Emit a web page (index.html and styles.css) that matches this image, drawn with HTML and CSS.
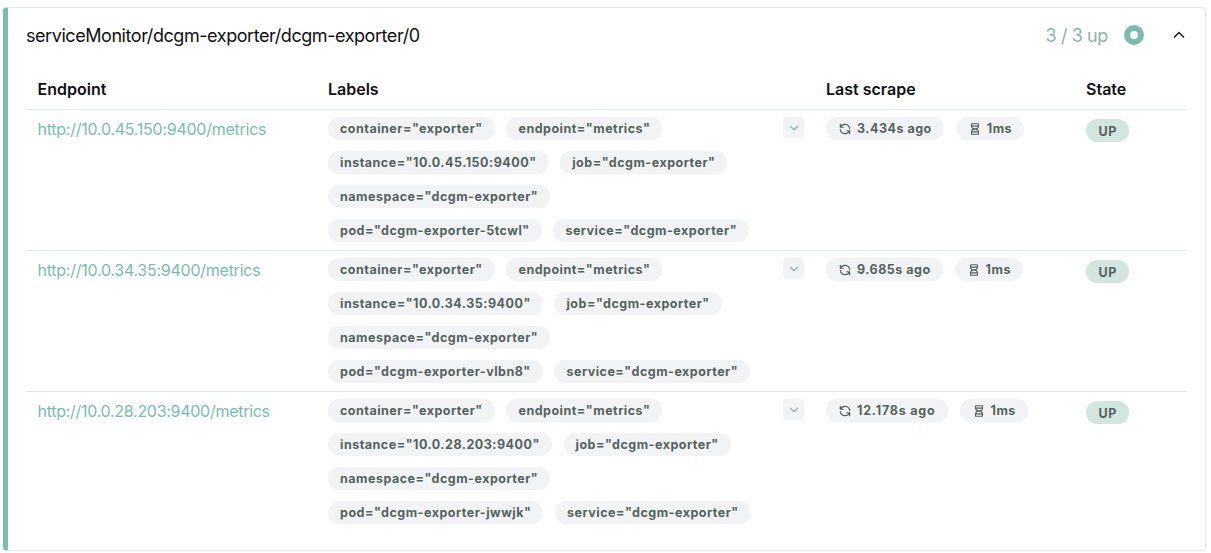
FILE: index.html
```
<!DOCTYPE html>
<html lang="en">
<head>
<meta charset="utf-8">
<title>Targets</title>
<link rel="stylesheet" href="styles.css">
</head>
<body>
<svg class="defs" width="0" height="0">
  <symbol id="refresh" viewBox="0 0 24 24"><path d="M20 11a8.1 8.1 0 0 0 -15.5 -2m-.5 -5v5h5"/><path d="M4 13a8.1 8.1 0 0 0 15.500 2m.5 5v-5h-5"/></symbol>
  <symbol id="hourglass" viewBox="0 0 24 24"><path d="M6.500 7h11"/><path d="M6 20v-2a6 6 0 1 1 12 0v2a1 1 0 0 1 -1 1h-10a1 1 0 0 1 -1 -1z"/><path d="M6 4v2a6 6 0 1 0 12 0v-2a1 1 0 0 0 -1 -1h-10a1 1 0 0 0 -1 1z"/><path d="M6.500 17h11"/></symbol>
  <symbol id="down" viewBox="0 0 24 24"><path d="M6 9l6 6l6 -6"/></symbol>
</svg>
<main class="card">
  <header class="head">
    <h1 class="title">serviceMonitor/dcgm-exporter/dcgm-exporter/0</h1>
    <div class="summary">3 / 3 up</div>
    <div class="ring"></div>
    <svg class="chevron" viewBox="0 0 12 8"><path d="M1 6.500L6 1.500L11 6.500"/></svg>
  </header>
  <section class="table">
    <div class="row labels-row"><div>Endpoint</div><div>Labels</div><div>Last scrape</div><div>State</div></div>
    <div class="row">
      <a class="endpoint">http://10.0.45.150:9400/metrics</a>
      <div class="labels">
        <div class="badges"><span class="badge">container="exporter"</span><span class="badge">endpoint="metrics"</span><span class="badge">instance="10.0.45.150:9400"</span><span class="badge">job="dcgm-exporter"</span><span class="badge">namespace="dcgm-exporter"</span><span class="badge">pod="dcgm-exporter-5tcwl"</span><span class="badge">service="dcgm-exporter"</span></div>
        <button class="toggle"><svg class="icon"><use href="#down"/></svg></button>
      </div>
      <div class="scrape"><span class="badge"><svg class="icon"><use href="#refresh"/></svg>3.434s ago</span><span class="badge"><svg class="icon"><use href="#hourglass"/></svg>1ms</span></div>
      <div class="state"><span class="badge up">UP</span></div>
    </div>
    <div class="row">
      <a class="endpoint">http://10.0.34.35:9400/metrics</a>
      <div class="labels">
        <div class="badges"><span class="badge">container="exporter"</span><span class="badge">endpoint="metrics"</span><span class="badge">instance="10.0.34.35:9400"</span><span class="badge">job="dcgm-exporter"</span><span class="badge">namespace="dcgm-exporter"</span><span class="badge">pod="dcgm-exporter-vlbn8"</span><span class="badge">service="dcgm-exporter"</span></div>
        <button class="toggle"><svg class="icon"><use href="#down"/></svg></button>
      </div>
      <div class="scrape"><span class="badge"><svg class="icon"><use href="#refresh"/></svg>9.685s ago</span><span class="badge"><svg class="icon"><use href="#hourglass"/></svg>1ms</span></div>
      <div class="state"><span class="badge up">UP</span></div>
    </div>
    <div class="row">
      <a class="endpoint">http://10.0.28.203:9400/metrics</a>
      <div class="labels">
        <div class="badges"><span class="badge">container="exporter"</span><span class="badge">endpoint="metrics"</span><span class="badge">instance="10.0.28.203:9400"</span><span class="badge">job="dcgm-exporter"</span><span class="badge">namespace="dcgm-exporter"</span><span class="badge">pod="dcgm-exporter-jwwjk"</span><span class="badge">service="dcgm-exporter"</span></div>
        <button class="toggle"><svg class="icon"><use href="#down"/></svg></button>
      </div>
      <div class="scrape"><span class="badge wide"><svg class="icon"><use href="#refresh"/></svg>12.178s ago</span><span class="badge"><svg class="icon"><use href="#hourglass"/></svg>1ms</span></div>
      <div class="state"><span class="badge up">UP</span></div>
    </div>
  </section>
</main>
</body>
</html>
```
FILE: styles.css
```
* { box-sizing: border-box; }
body { margin: 0; background: #fff; color: #101113; font-family: Inter, sans-serif; }
.defs { display: block; }
.card {
  margin: 7px 5px 0 3px;
  height: 544px;
  border: 1px solid #dde9e6;
  border-left: 5px solid #7abcae;
  border-radius: 4px;
  padding: 0 18px;
}
.head { display: flex; align-items: center; height: 54px; }
.title { margin: 0 auto 0 0; padding-top: 2px; font-size: 18px; font-weight: 400; line-height: 28px; letter-spacing: -0.44px; }
.summary { font-size: 18px; color: #8fb3ab; letter-spacing: -0.4px; }
.ring { width: 20px; height: 20px; margin-left: 15.500px; border: 6px solid #7abcae; border-radius: 50%; }
.chevron { width: 12px; height: 8px; margin: 0 2.500px 0 29px; fill: none; stroke: #101113; stroke-width: 1.4; }
.row {
  display: grid;
  grid-template-columns: 290.500px 498px 260px 1fr;
  height: 141px;
  padding: 7px 0 0 11.500px;
  border-bottom: 1px solid #dcebe7;
  width: 1161px;
}
.row:last-child { border-bottom: 0; }
.labels-row { height: 48px; padding-top: 15px; font-size: 16px; font-weight: 600; line-height: 24px; }
.endpoint { font-size: 16px; line-height: 24px; color: #7abcae; letter-spacing: -0.25px; }
.row:last-child .endpoint { letter-spacing: -0.28px; }
.labels { display: flex; justify-content: space-between; align-items: flex-start; padding-right: 22px; }
.badges { display: flex; flex-wrap: wrap; align-content: flex-start; gap: 11px 11.700px; width: 436px; }
.badge {
  display: inline-flex;
  align-items: center;
  height: 23px;
  padding: 0 12px;
  border-radius: 12px;
  background: #f1f3f5;
  color: #55625f;
  font-size: 12.5px;
  font-weight: 700;
  letter-spacing: 0.5px;
  white-space: nowrap;
}
.icon { width: 14px; height: 14px; fill: none; stroke: currentColor; stroke-width: 2; stroke-linecap: round; stroke-linejoin: round; }
.toggle {
  display: flex;
  align-items: center;
  justify-content: center;
  width: 21px;
  height: 21px;
  padding: 0;
  border: 0;
  border-radius: 4px;
  background: #f1f3f5;
  color: #8fb3ab;
}
.scrape { display: flex; align-items: flex-start; gap: 12px; }
.scrape .icon { margin-right: 5px; }
.wide { letter-spacing: 0.8px; }
.state { padding-top: 2px; }
.up { padding: 1px 12.500px 0; background: #d2e5de; }
```
